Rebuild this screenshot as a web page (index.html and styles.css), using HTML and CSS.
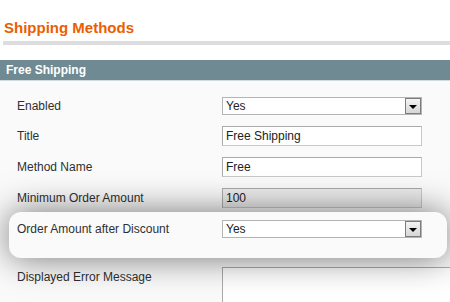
FILE: index.html
```html
<!DOCTYPE html>
<html lang="en">
<head>
  <meta charset="UTF-8" />
  <title>Shipping Methods</title>
  <link rel="stylesheet" href="styles.css">
</head>
<body>

  <div class="page-title">
    <h3>Shipping Methods</h3>
  </div>

  <div class="section-head">Free Shipping</div>

  <div class="fieldset">
    <div class="row row-select">
      <div class="label">Enabled</div>
      <div class="select"><span>Yes</span><span class="arrow"></span></div>
    </div>
    <div class="row">
      <div class="label">Title</div>
      <div class="input">Free Shipping</div>
    </div>
    <div class="row">
      <div class="label">Method Name</div>
      <div class="input">Free</div>
    </div>
    <div class="row">
      <div class="label">Minimum Order Amount</div>
      <div class="input input-muted">100</div>
    </div>

    <!-- highlighted row -->
    <div class="row row-select highlight">
      <div class="label">Order Amount after Discount</div>
      <div class="select"><span>Yes</span><span class="arrow"></span></div>
    </div>

    <div class="row">
      <div class="label">Displayed Error Message</div>
      <div class="textarea"></div>
    </div>
  </div>

</body>
</html>
```

FILE: styles.css
```css
body {
  margin: 0;
  background: #fff;
  font-family: "Liberation Sans", Arial, sans-serif;
  font-size: 12px;
  color: #2f2f2f;
  overflow: hidden;
}

.page-title {
  margin: 19px 0 0 3px;
  padding-bottom: 4px;
  border-bottom: 4px solid #ddd;
}

.page-title h3 {
  margin: 0;
  padding-left: 1px;
  font-size: 15px;
  line-height: 18px;
  color: #eb5e00;
}

.section-head {
  margin-top: 15px;
  height: 20px;
  line-height: 20px;
  padding-left: 6px;
  background: #6f8a92;
  border-bottom: 1px solid #d3dbde;
  color: #fff;
  font-weight: bold;
}

.fieldset {
  background: #fafafa;
  padding-top: 16px;
  height: 300px;
}

.row {
  display: flex;
  align-items: flex-start;
  margin-bottom: 11px;
}

.label {
  width: 222px;
  flex-shrink: 0;
  box-sizing: border-box;
  padding-left: 17px;
  line-height: 20px;
}

.row-select .label {
  line-height: 18px;
}

.input,
.select {
  width: 200px;
  box-sizing: border-box;
  border: 1px solid;
  border-color: #aaa #c8c8c8 #c8c8c8 #aaa;
  background: #fff;
  color: #222;
  padding-left: 3px;
}

.input {
  height: 20px;
  line-height: 18px;
}

.input-muted {
  background: #ececec;
}

.select {
  height: 18px;
  line-height: 16px;
  display: flex;
  justify-content: space-between;
  border-color: #b4b4b4;
}

.select .arrow {
  width: 16px;
  height: 16px;
  box-sizing: border-box;
  border: 1px solid #7d7d7d;
  background: linear-gradient(#f4f4f4, #d6d6d6);
  display: flex;
  align-items: center;
  justify-content: center;
}

.select .arrow::after {
  content: "";
  border-top: 4px solid #000;
  border-left: 4px solid transparent;
  border-right: 4px solid transparent;
  margin-top: 1px;
}

.highlight {
  position: relative;
  z-index: 1;
  margin: -7px 3px 9px 9px;
  padding: 8px 0 20px;
  background: #fafafa;
  border-radius: 12px;
  box-shadow: 0 0 35px rgba(0, 0, 0, 0.55);
}

.highlight .label {
  width: 213px;
  padding-left: 8px;
}

.textarea {
  width: 274px;
  height: 80px;
  flex-shrink: 0;
  box-sizing: border-box;
  border: 1px solid;
  border-color: #aaa #c8c8c8 #c8c8c8 #aaa;
  background: #fff;
}
```
